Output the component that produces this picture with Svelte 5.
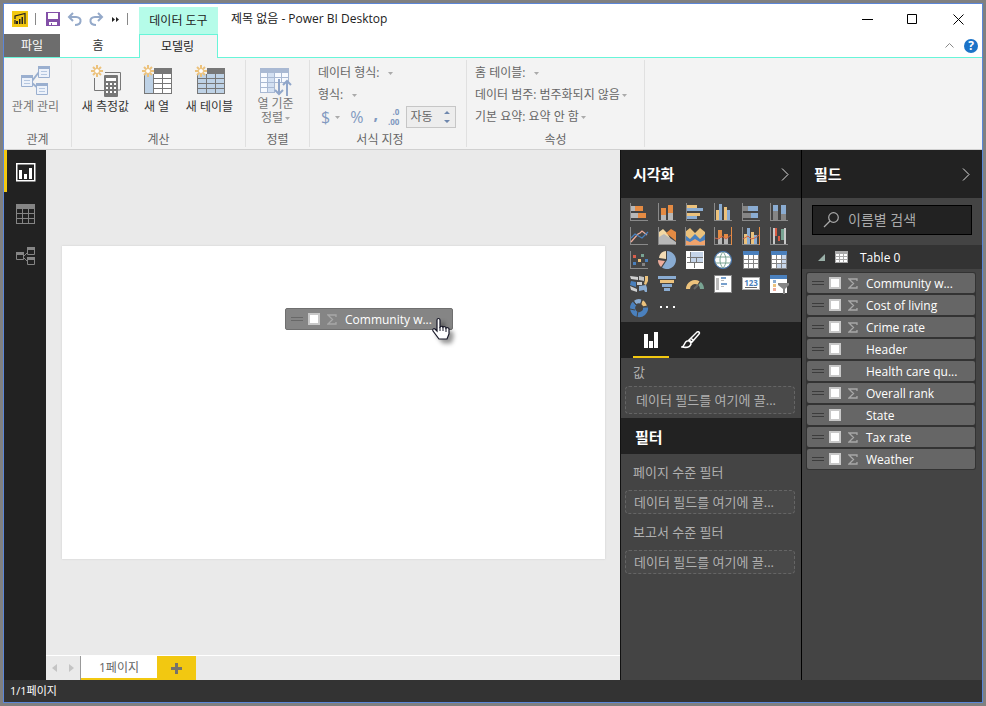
<script>
  const r = (x, y, w, h) => `M${x} ${y}h${w}v${h}h${-w}z`;
  const fill = (f, ...d) => ({ f, d: d.join('') });
  const line = (s, d, w = 1) => ({ s, d, w });
  const axis = fill('#8a8a8a', r(0, 0, 1, 18), r(0, 17, 18, 1));
  const OR = '#e58b43', BL = '#8aacd2', YE = '#ecc27c', GR = '#b8b8b8', DG = '#858585', NB = '#4a80bd', PK = '#eeac9b', GN = '#79a493';

  const visuals = [
    { name: 'Stacked bar chart', parts: [axis, fill(GR, r(1, 3, 4, 5), r(1, 10, 7, 5)), fill(OR, r(5, 3, 8, 5), r(8, 10, 8, 5))] },
    { name: 'Stacked column chart', parts: [axis, fill(GR, r(3, 12, 5, 5), r(10, 10, 5, 7)), fill(OR, r(3, 5, 5, 7), r(10, 2, 5, 8))] },
    { name: 'Clustered bar chart', parts: [axis, fill(YE, r(1, 2, 10, 3), r(1, 10, 13, 3)), fill(BL, r(1, 5, 16, 3), r(1, 13, 10, 3))] },
    { name: 'Clustered column chart', parts: [axis, fill(YE, r(2, 7, 3, 10), r(10, 4, 3, 13)), fill(BL, r(5, 1, 3, 16), r(13, 7, 3, 10))] },
    { name: '100% stacked bar chart', parts: [axis, fill(DG, r(1, 3, 5, 5), r(1, 10, 8, 5)), fill(BL, r(6, 3, 10, 5), r(9, 10, 7, 5))] },
    { name: '100% stacked column chart', parts: [axis, fill(DG, r(3, 8, 5, 9), r(11, 11, 5, 6)), fill(BL, r(3, 2, 5, 6), r(11, 2, 5, 9))] },
    { name: 'Line chart', parts: [axis, line(PK, 'M1 15L8 7l2-1 2-2 5 4', 1.3), line(NB, 'M1 11l4-4 7 4 6-6', 1.3)] },
    { name: 'Area chart', parts: [axis, fill('#f2d8a4', 'M1 5l4-3 4 4 3 5-11 2z'), fill(OR, 'M8 6l5-4 5 3v9z'), fill(GR, 'M1 10l5-3 12 8v2H1z')] },
    { name: 'Stacked area chart', parts: [fill(YE, 'M-1 5l5-4 5 5 5-5 5 4v8H-1z'), fill(NB, 'M-1 8l5 4 5-5 5 5 5-5v9H-1z'), fill('#f0a36c', 'M-1 18v-5l5 2 5-3 5 3 5-2v5z'), fill(DG, r(-1, 0, 1, 18), r(-1, 18, 20, 1))] },
    { name: 'Line and stacked column chart', parts: [axis, fill(OR, r(17, 0, 1, 18), r(4, 3, 4, 8), r(10, 7, 4, 4)), fill(GR, r(4, 11, 4, 6), r(10, 11, 4, 6)), line('#cf6449', 'M1 11l4 1 3-3 4 3 5-4', 1)] },
    { name: 'Line and clustered column chart', parts: [axis, fill(OR, r(17, 0, 1, 18)), fill(YE, r(2, 7, 3, 10), r(9, 5, 3, 12)), fill(BL, r(5, 1, 3, 16), r(12, 8, 3, 9)), line('#cf6449', 'M1 12l5-3 3 3 4-1 4-3', 1)] },
    { name: 'Waterfall chart', parts: [axis, fill('#c9c9c9', r(3, 1, 2, 16), r(14, 1, 2, 16)), fill('#d85b43', r(5, 1, 2, 8), r(8, 9, 2, 5)), fill(GN, r(11, 2, 3, 11))] },
    { name: 'Scatter chart', parts: [axis, fill('#d95f4c', r(3, 4, 3, 3)), fill(GN, r(11, 3, 3, 3)), fill(YE, r(8, 8, 3, 3)), fill(NB, r(3, 11, 3, 3), r(15, 8, 3, 3)), fill(DG, r(12, 12, 3, 3))] },
    { name: 'Pie chart', parts: [fill(BL, 'M9 9V0a9 9 0 1 1-5 16.5z'), fill(PK, 'M7 10l-4 6A9 9 0 0 1 0 9z'), fill('#f3dcb5', 'M8 8V0A8 8 0 0 0 1 7z')] },
    { name: 'Treemap', parts: [fill('#fff', r(0, 0, 18, 18)), fill('#777', r(1, 1, 16, 16)), fill('#fff', r(1, 1, 3, 5), r(1, 7, 3, 4), r(1, 12, 7, 5), r(9, 12, 8, 5)), fill('#c5d4e8', r(5, 1, 12, 5), r(5, 7, 5, 4), r(11, 7, 6, 4))] },
    { name: 'Map', parts: [fill('#fff', 'M9 1a8 8 0 1 0 0 16A8 8 0 1 0 9 1z'), line(NB, 'M9 .5a8.5 8.5 0 1 0 0 17a8.5 8.5 0 1 0 0-17z'), line(GN, 'M2 6h14M2 12h14M9 1C5 5 5 13 9 17M9 1c4 4 4 12 0 16')] },
    { name: 'Table', parts: [fill(DG, r(1, 0, 16, 18)), fill(NB, r(1, 0, 16, 4)), fill('#fff', r(2, 4, 4, 4), r(7, 4, 4, 4), r(12, 4, 4, 4), r(2, 9, 4, 3), r(7, 9, 4, 3), r(12, 9, 4, 3), r(2, 13, 4, 4), r(7, 13, 4, 4), r(12, 13, 4, 4))] },
    { name: 'Matrix', parts: [fill(DG, r(1, 0, 16, 18)), fill(NB, r(1, 0, 16, 4)), fill('#fff', r(2, 4, 4, 4), r(7, 4, 4, 4), r(2, 9, 4, 3), r(7, 9, 4, 3), r(2, 13, 4, 4)), fill('#c8d7eb', r(12, 4, 4, 4), r(12, 9, 4, 3), r(7, 13, 4, 4), r(12, 13, 4, 4))] },
    { name: 'Filled map', parts: [fill('#d0d0d0', 'M0 1l8 1v3l-7-1zM7 7h5v3H7zM0 11l7 3v3l-6-2z'), fill(NB, 'M1 6l5 1v5l-6-2z'), fill('#c5c5c5', 'M9 1l5 1v4l-5-1z'), fill(YE, 'M15 1h3v5l-2 4-2-1 1-4z'), fill(BL, 'M9 11l7-1 1 3v4h-2l-1-2-5 1z')] },
    { name: 'Funnel', parts: [fill(BL, r(0, 1, 18, 3), r(4, 9, 10, 3), r(6, 13, 6, 3)), fill(YE, r(2, 5, 14, 3))] },
    { name: 'Gauge', parts: [line(YE, 'M2 14a7 7 0 0 1 10.5-6', 4), line(GN, 'M13.500 8.500A7 7 0 0 1 16 14', 4), line('#666', 'M8 14l4-4', 2)] },
    { name: 'Multi-row card', parts: [fill('#888', r(0, 0, 18, 18)), fill('#fff', r(1, 1, 16, 16)), fill('#bbb', r(2, 3, 3, 12)), fill('#77a0cd', r(7, 2, 5, 2), r(7, 8, 6, 2)), fill('#bbb', r(7, 5, 3, 1), r(7, 11, 3, 1))] },
    { name: 'Card', text: '123', parts: [fill('#aaa', r(0, 2, 18, 13)), fill('#fff', r(1, 3, 16, 11)), fill('#666', r(3, 12, 12, 1))] },
    { name: 'Slicer', parts: [fill('#fff', r(0, 0, 17, 18)), fill(NB, r(0, 0, 17, 4)), fill(BL, r(3, 5, 3, 3)), fill(YE, r(3, 9, 3, 3)), fill(PK, r(3, 13, 3, 3)), fill('#858585', 'M8 8h11v2l-4 4v5h-2v-5l-5-4z')] },
    { name: 'Donut chart', parts: [line(NB, 'M15.500 8A6.500 6.500 0 1 1 4.500 4.500', 5), line(BL, 'M5 3.500A6.500 6.500 0 0 1 11 2.500', 4), line(YE, 'M12 3a7 7 0 0 1 3 4', 4), line('#444', 'M3 1l3 5M12 0l-1 5M18 8h-5M0 10l5 1M8 12l-1 6')] },
    { name: 'More visuals', parts: [fill('#fff', r(2, 7, 2, 2), r(8, 7, 2, 2), r(15, 7, 2, 2))] }
  ];

  const fields = [
    ['Community w...', true], ['Cost of living', true], ['Crime rate', true],
    ['Header', false], ['Health care qu...', false], ['Overall rank', true],
    ['State', false], ['Tax rate', true], ['Weather', true]
  ];
</script>

{#snippet sigma()}
  <svg class="sigma" width="10" height="11" viewBox="0 0 10 11" fill="none" stroke="#a8a8a8" stroke-width="1.3"><path d="M9 3V1H1l4.500 4.500L1 10h8V8" /></svg>
{/snippet}

{#snippet grip(color)}
  <svg class="grip" width="12" height="5" viewBox="0 0 12 5"><path d="M0 0h12v1H0zM0 3h12v1H0z" fill={color} /></svg>
{/snippet}

{#snippet star()}
  <g stroke="#ecc27c" stroke-width="2" fill="none"><path d="M6 0v12M0 6h12M2 2l8 8M10 2l-8 8" /></g>
  <circle cx="6" cy="6" r="2.5" fill="#fff" stroke="#ecc27c" />
{/snippet}

{#snippet caret()}
  <svg class="caret" width="5" height="3" viewBox="0 0 5 3"><path d="M0 0h5L2.500 3z" fill="#aaa" /></svg>
{/snippet}

{#snippet pick(id, label, value)}
  <div class="pick">
    <label for={id}>{label}</label>
    <select {id}><option>{value}</option></select>
    {@render caret()}
  </div>
{/snippet}

<div class="desktop">
  <div class="window">
    <header class="title">
      <div class="quick">
        <svg class="logo" width="16" height="16" viewBox="0 0 16 16"><path d="M0 0h16v16H0z" fill="#f2c811" /><g fill="none" stroke="#222" stroke-width="1.2"><path d="M3 8V5l10-2.500V13M3 9v4" /></g><path d="M4 10h2v3H4zM7 8h1.500v5H7zM9.500 6H11v7H9.500z" fill="#222" /></svg>
        <i class="bar"></i>
        <button aria-label="저장"><svg width="14" height="14" viewBox="0 0 14 14"><path d="M0 0h14v14H0z" fill="#8350a8" /><path d="M2 1h10v6H2zM3 10h8v3H6v-2H5v2H3z" fill="#fff" /></svg></button>
        <button aria-label="실행 취소"><svg width="15" height="14" viewBox="0 0 15 14" fill="none" stroke="#94a9c9" stroke-width="2"><path d="M6 1L2 5l4 4M2 5h7c3 0 5 2 4.500 4.500C13 12 11 13 8 13" /></svg></button>
        <button aria-label="다시 실행"><svg width="15" height="14" viewBox="0 0 15 14" fill="none" stroke="#94a9c9" stroke-width="2"><path d="M9 1l4 4-4 4M13 5H6C3 5 1 7 1.500 9.500 2 12 4 13 7 13" /></svg></button>
        <button class="more" aria-label="사용자 지정"><svg width="9" height="5" viewBox="0 0 9 5"><path d="M1 0l3 2.500L1 5zM5 0l3 2.500L5 5z" fill="#222" /></svg></button>
        <i class="bar"></i>
      </div>
      <div class="context">데이터 도구</div>
      <h1>제목 없음 - Power BI Desktop</h1>
      <div class="controls">
        <button aria-label="최소화"><svg width="11" height="10" viewBox="0 0 11 10"><path d="M0 5h11v1H0z" /></svg></button>
        <button aria-label="최대화"><svg width="11" height="10" viewBox="0 0 11 10" fill="none" stroke="#000"><path d="M.5.5h9v9h-9z" /></svg></button>
        <button aria-label="닫기"><svg width="11" height="11" viewBox="0 0 11 11" fill="none" stroke="#000"><path d="M.5.5l10 10M10.500.5l-10 10" /></svg></button>
      </div>
    </header>

    <nav class="tabs">
      <button class="file">파일</button>
      <button class="home">홈</button>
      <button class="model">모델링</button>
      <div class="help">
        <svg width="9" height="5" viewBox="0 0 9 5" fill="none" stroke="#888"><path d="M.5 4.500l4-4 4 4" /></svg>
        <button aria-label="도움말">?</button>
      </div>
    </nav>

    <section class="ribbon">
      <div class="group g1">
        <div class="tools">
          <button class="tool dim">
            <svg width="30" height="32" viewBox="0 0 30 32"><path d="M11 16l7-9M11 18l7 6" stroke="#9aafcf" stroke-width="2" fill="none" /><g fill="#edf2fa" stroke="#9aafcf"><path d="M.5 10.500h11v11H.5zM17.500 1.500h11v11h-11zM15.500 18.500h11v11h-11z" /></g><path d="M0 10h12v3H0zM17 1h12v3H17zM15 18h12v3H15z" fill="#9aafcf" /><path d="M3 15.500h6M3 18.500h6M20 6.500h6M20 9.500h6M18 23.500h6M18 26.500h6" stroke="#b5c7e0" /></svg>
            <span>관계 관리</span>
          </button>
        </div>
        <h2>관계</h2>
      </div>
      <div class="group g2">
        <div class="tools">
          <button class="tool t1">
            <svg width="30" height="32" viewBox="0 0 30 32"><path d="M3.500 13v12.500H13M14 7.500h15.500V25H27" fill="none" stroke="#777" />{@render star()}<rect x="13" y="10" width="14" height="22" rx="1" fill="#777" /><path d="M15 13h10v3H15zM15 18h2v2h-2zM19 18h2v2h-2zM23 18h2v2h-2zM15 22h2v2h-2zM19 22h2v2h-2zM23 22h2v2h-2zM15 26h2v2h-2zM19 26h2v2h-2zM23 26h2v2h-2z" fill="#fff" /></svg>
            <span>새 측정값</span>
          </button>
          <button class="tool t2">
            <svg width="30" height="32" viewBox="0 0 30 32"><path d="M2 3h28v26H2z" fill="#777" /><path d="M3 9h8v19H3z" fill="#bed2e6" /><path d="M12 9h8v4h-8zM21 9h8v4h-8zM12 14h8v4h-8zM21 14h8v4h-8zM12 19h8v4h-8zM21 19h8v4h-8zM12 24h8v4h-8zM21 24h8v4h-8z" fill="#fff" /><path d="M0 0h12v9H0z" fill="#f3f3f3" />{@render star()}</svg>
            <span>새 열</span>
          </button>
          <button class="tool t3">
            <svg width="30" height="32" viewBox="0 0 30 32"><path d="M2 3h28v26H2z" fill="#777" /><path d="M3 9h8v4H3zM3 14h8v4H3zM3 19h8v4H3zM3 24h8v4H3zM12 9h8v4h-8zM21 9h8v4h-8zM12 14h8v4h-8zM21 14h8v4h-8zM12 19h8v4h-8zM21 19h8v4h-8zM12 24h8v4h-8zM21 24h8v4h-8z" fill="#bed2e6" /><path d="M0 0h12v9H0z" fill="#f3f3f3" />{@render star()}</svg>
            <span>새 테이블</span>
          </button>
        </div>
        <h2>계산</h2>
      </div>
      <div class="group g3">
        <div class="tools">
          <button class="tool dim sort">
            <svg width="32" height="32" viewBox="0 0 32 32"><path d="M0 3h29v25H0z" fill="#a9b9d3" /><path d="M1 8h6v4H1zM15 8h6v4h-6zM22 8h6v4h-6zM1 13h6v4H1zM15 13h6v4h-6zM22 13h6v4h-6zM1 18h6v4H1zM1 23h6v4H1z" fill="#f7faff" /><path d="M8 8h6v4H8zM8 13h6v4H8zM8 18h6v4H8zM8 23h6v4H8z" fill="#d3e0f2" /><path d="M15 18h14v10H15z" fill="#f3f3f3" /><path d="M19 14v15M15 25l4 4 4-4M27 31V16M23 20l4-4 4 4" fill="none" stroke="#90a6ca" stroke-width="2" /></svg>
            <span>열 기준</span>
            <span>정렬{@render caret()}</span>
          </button>
        </div>
        <h2>정렬</h2>
      </div>
      <div class="group g4">
        <div class="form">
          {@render pick('type', '데이터 형식:', '')}
          {@render pick('format', '형식:', '')}
          <div class="formats">
            <button aria-label="통화">$ {@render caret()}</button>
            <button>%</button>
            <button class="comma">,</button>
            <button class="decimals" aria-label="소수 자릿수"><span>.0</span><span>.00</span></button>
            <div class="spin">
              <input aria-label="소수 자릿수 값" value="자동" />
              <svg width="6" height="14" viewBox="0 0 6 14"><path d="M0 4l3-3 3 3zM0 10h6l-3 3z" fill="#6e87ad" /></svg>
            </div>
          </div>
        </div>
        <h2>서식 지정</h2>
      </div>
      <div class="group g5">
        <div class="form">
          {@render pick('home', '홈 테이블:', '')}
          {@render pick('category', '데이터 범주:', '범주화되지 않음')}
          {@render pick('summary', '기본 요약:', '요약 안 함')}
        </div>
        <h2>속성</h2>
      </div>
    </section>

    <main>
      <nav class="rail">
        <button class="on" aria-label="보고서"><svg width="20" height="19" viewBox="0 0 20 19"><path d="M.75.75h18v17h-18z" fill="none" stroke="#fff" stroke-width="1.5" /><path d="M3 7h3v9H3zM8 11h3v5H8zM13 5h3v11h-3z" fill="#fff" /></svg></button>
        <button aria-label="데이터"><svg width="20" height="20" viewBox="0 0 20 20"><path d="M0 0h19v20H0z" fill="#858585" /><path d="M1 5h5v4H1zM7 5h5v4H7zM13 5h5v4h-5zM1 10h5v4H1zM7 10h5v4H7zM13 10h5v4h-5zM1 15h5v4H1zM7 15h5v4H7zM13 15h5v4h-5z" fill="#222" /></svg></button>
        <button aria-label="관계"><svg width="20" height="19" viewBox="0 0 20 19"><g fill="none" stroke="#858585"><path d="M.5 5.500h7v7h-7zM11.500.5h7v7h-7zM11.500 10.500h7v7h-7zM8 9l3-3M8 11l3 3" /></g><path d="M0 5h8v3H0zM11 0h8v3h-8zM11 10h8v3h-8z" fill="#858585" /></svg></button>
      </nav>

      <div class="work">
        <div class="canvas">
          <div class="sheet">
            <div class="drag">
              {@render grip('#686868')}
              <input type="checkbox" aria-label="Community w..." />
              <span class="sig">{@render sigma()}</span>
              <span>Community w...</span>
              <svg class="hand" width="28" height="32" viewBox="0 0 28 32"><path d="M7 3c0-2 3-2 3 0v7c1-1 3-1 3 0 1-1 3 0 3 1 1-1 3 0 3 1v5l-2 5H9l-6-8c-1-2 1-3 2-2l2 2z" fill="#fff" stroke="#151525" stroke-width="1.2" /><path d="M10 10v4M13 10v4M16 11v4" stroke="#151525" /></svg>
            </div>
          </div>
        </div>
        <div class="pages">
          <button class="arrow" aria-label="이전"><svg width="5" height="8" viewBox="0 0 5 8"><path d="M5 0v8L0 4z" fill="#c4c4c4" /></svg></button>
          <button class="arrow" aria-label="다음"><svg width="5" height="8" viewBox="0 0 5 8"><path d="M0 0v8l5-4z" fill="#c4c4c4" /></svg></button>
          <button class="page">1페이지</button>
          <button class="add" aria-label="새 페이지"><svg width="11" height="11" viewBox="0 0 11 11"><path d="M4 0h3v4h4v3H7v4H4V7H0V4h4z" fill="#77726a" /></svg></button>
        </div>
      </div>

      <aside class="viz">
        <div class="head"><h3>시각화</h3><svg width="8" height="13" viewBox="0 0 8 13" fill="none" stroke="#ddd"><path d="M1 .5l6 6-6 6" /></svg></div>
        <div class="grid">
          {#each visuals as v}
            <button aria-label={v.name}>
              <svg width="18" height="18" viewBox="0 0 18 18">
                {#each v.parts as p}
                  <path d={p.d} fill={p.f ?? 'none'} stroke={p.s ?? 'none'} stroke-width={p.w ?? 0} />
                {/each}
                {#if v.text}<text x="9" y="11" text-anchor="middle" font-size="8" font-weight="700" fill="#4a80bd">{v.text}</text>{/if}
              </svg>
            </button>
          {/each}
        </div>
        <div class="modes">
          <button class="on" aria-label="필드"><svg width="16" height="16" viewBox="0 0 16 16"><path d="M1 2h4v14H1zM6 9h4v7H6zM11 0h4v16h-4z" fill="#fff" /></svg></button>
          <button aria-label="서식"><svg width="20" height="18" viewBox="0 0 20 18" fill="none" stroke="#fff" stroke-width="1.5"><path d="M8 9l8-8c2-1 3 1 2 2l-7 8zM10 7l3 3M6 10c2-1 4 1 4 3-1 3-4 4-9 3 3-1 2-5 5-6z" /></svg></button>
        </div>
        <div class="well">
          <p class="value">값</p>
          <div class="drop tall">데이터 필드를 여기에 끌...</div>
        </div>
        <h3 class="filter">필터</h3>
        <div class="filters">
          <p>페이지 수준 필터</p>
          <div class="drop">데이터 필드를 여기에 끌...</div>
          <p>보고서 수준 필터</p>
          <div class="drop">데이터 필드를 여기에 끌...</div>
        </div>
      </aside>

      <aside class="fields">
        <div class="head"><h3>필드</h3><svg width="8" height="13" viewBox="0 0 8 13" fill="none" stroke="#ddd"><path d="M1 .5l6 6-6 6" /></svg></div>
        <label class="search">
          <svg width="17" height="16" viewBox="0 0 17 16" fill="none" stroke="#aaa" stroke-width="1.2"><circle cx="10.5" cy="5.5" r="4.8" /><path d="M7 9l-6 6" /></svg>
          <input aria-label="이름별 검색" placeholder="이름별 검색" />
        </label>
        <div class="table">
          <svg width="7" height="7" viewBox="0 0 7 7"><path d="M7 0v7H0z" fill="#9ab0a8" /></svg>
          <svg width="13" height="12" viewBox="0 0 13 12"><path d="M0 0h13v12H0z" fill="#aaa" /><path d="M1 3h3v2H1zM5 3h3v2H5zM9 3h3v2H9zM1 6h3v2H1zM5 6h3v2H5zM9 6h3v2H9zM1 9h3v2H1zM5 9h3v2H5zM9 9h3v2H9z" fill="#fff" /></svg>
          <span class="name">Table 0</span>
        </div>
        <ul>
          {#each fields as [name, numeric]}
            <li>
              <label>
                {@render grip('#3c3c3c')}
                <input type="checkbox" />
                <span class="sig">{#if numeric}{@render sigma()}{/if}</span>
                <span class="name">{name}</span>
              </label>
            </li>
          {/each}
        </ul>
      </aside>
    </main>

    <footer>1/1페이지</footer>
  </div>
</div>

<style>
  :global(body) { margin: 0; }
  .desktop, .desktop :global(*) { box-sizing: border-box; }
  .desktop {
    min-height: 100vh; padding: 3px; background: #808080; display: flex;
    font: 12px/16px "Open Sans", "Noto Sans CJK KR", sans-serif; color: #333;
  }
  button, input, select { font: inherit; color: inherit; background: none; border: 0; padding: 0; margin: 0; border-radius: 0; }
  button { display: flex; align-items: center; justify-content: center; }
  h1, h2, h3, p, ul { margin: 0; padding: 0; font-weight: 400; font-size: inherit; list-style: none; }
  svg { flex: none; display: block; }
  .window { flex: 1; min-width: 0; display: flex; flex-direction: column; border: 1px solid #5b86d8; background: #fff; }

  .title { display: flex; height: 30px; }
  .quick { width: 135px; display: flex; align-items: center; padding-left: 8px; gap: 7px; }
  .bar { width: 1px; height: 12px; background: #888; margin-right: 3px; }
  .bar:last-child { margin: 0; }
  .context { width: 79px; margin-top: 3px; background: #b5fce9; display: flex; align-items: center; justify-content: center; color: #222; }
  h1 { flex: 1; padding-left: 13px; line-height: 30px; color: #222; white-space: nowrap; }
  .controls { display: flex; }
  .controls button { width: 45px; }
  .controls button:last-child { width: 47px; }

  .tabs { display: flex; height: 24px; border-bottom: 1px solid #68f5d9; }
  .file { width: 56px; background: #6d6d6d; color: #fff; }
  .home { width: 79px; padding-right: 3px; }
  .model { width: 79px; height: 24px; padding-right: 2px; background: #f3f3f3; border: 1px solid #68f5d9; border-bottom: 0; color: #222; }
  .help { flex: 1; display: flex; align-items: center; justify-content: flex-end; gap: 10px; padding-right: 4px; }
  .help button { width: 14px; height: 14px; border-radius: 50%; background: #1b73c8; color: #fff; font-weight: 700; }

  .ribbon { display: flex; height: 92px; padding: 2px 0; background: #f3f3f3; border-bottom: 1px solid #d0d0d0; }
  .group { display: flex; flex-direction: column; justify-content: space-between; border-right: 1px solid #e0e0e0; }
  h2 { text-align: center; color: #666; line-height: 14px; }
  .g1 { width: 68px; } .g2 { width: 174px; } .g3 { width: 64px; } .g4 { width: 157px; } .g5 { width: 178px; }
  .g4 h2 { padding-right: 16px; }
  .tools { display: flex; justify-content: center; padding-top: 5px; }
  .g1 .tools, .g3 .tools { padding-right: 4px; }
  .tool { flex-direction: column; justify-content: flex-start; gap: 3px; line-height: 14px; white-space: nowrap; }
  .t1 { width: 54px; } .t2 { width: 48px; } .t3 { width: 58px; }
  .sort { gap: 0; }
  .dim { color: #777; }
  .tool .caret { display: inline-block; vertical-align: middle; margin-left: 2px; }
  .form { display: flex; flex-direction: column; padding: 2px 0 0 8px; color: #666; }
  .pick { display: flex; align-items: center; height: 22px; white-space: nowrap; }
  .pick select { appearance: none; margin-left: 3px; min-width: 4px; }
  .pick .caret { margin-left: 2px; }
  .formats { display: flex; align-items: center; height: 22px; gap: 10px; color: #8199c0; font-size: 16px; padding-left: 3px; }
  .formats button { gap: 5px; }
  .formats .comma { align-self: flex-start; font-weight: 700; }
  .formats .decimals { flex-direction: column; align-items: flex-end; gap: 0; font-size: 8px; line-height: 10px; font-weight: 700; }
  .spin { display: flex; align-items: center; width: 50px; height: 22px; margin-left: -3px; border: 1px solid #c6c6c6; background: #ededed; padding: 0 5px 0 3px; }
  .spin input { flex: 1; width: 0; font-size: 12px; color: #666; }

  main { flex: 1; display: flex; min-height: 0; }
  .rail { width: 42px; background: #222; }
  .rail button { width: 42px; height: 42px; border-left: 3px solid transparent; padding: 2px 1px 0 0; }
  .rail .on { border-color: #f2c811; }
  .work { flex: 1; min-width: 0; display: flex; flex-direction: column; background: #eaeaea; }
  .canvas { flex: 1; display: flex; align-items: center; padding: 0 15px 0 16px; }
  .sheet { position: relative; flex: 1; aspect-ratio: 543 / 313; background: #fff; box-shadow: 0 0 2px #ccc; }
  .drag {
    position: absolute; left: 223px; top: 62px; width: 168px; height: 22px; padding-left: 5px; display: flex; align-items: center;
    background: #858585; border: 1px solid #6f6f6f; border-radius: 2px; color: #fff;
  }
  .hand { position: absolute; left: 144px; top: 8px; filter: drop-shadow(4px 4px 2px rgb(0 0 0 / 40%)); }
  .pages { display: flex; height: 25px; border-top: 1px solid #fff; }
  .arrow { width: 17px; }
  .page { width: 77px; border-left: 1px solid #999; background: #fff; box-shadow: inset 0 -2px #f2c811; color: #666; }
  .add { width: 39px; background: #f2c811; }

  aside { background: #444; color: #fff; }
  h3 { font-size: 15px; line-height: 24px; font-weight: 700; }
  .head { height: 48px; padding: 0 12px; background: #222; display: flex; align-items: center; justify-content: space-between; }
  .viz { width: 182px; border-left: 1px solid #111; border-right: 1px solid #000; }
  .grid { display: grid; grid-template-columns: repeat(6, 28px); grid-auto-rows: 24px; padding: 2px 4px; }
  .grid svg { overflow: visible; }
  .modes { display: flex; height: 36px; padding-left: 12px; gap: 4px; background: #222; }
  .modes button { width: 36px; padding-top: 2px; border-bottom: 2px solid transparent; }
  .modes .on { border-color: #f2c811; }
  .well, .filters { padding: 0 6px 4px 4px; font-size: 13px; color: #b0b0b0; }
  .value { height: 28px; line-height: 28px; padding-left: 8px; }
  .drop { height: 24px; line-height: 22px; padding-left: 8px; border: 1px dashed #656565; border-radius: 4px; background: #494949; white-space: nowrap; }
  .tall { height: 28px; line-height: 26px; padding-left: 10px; }
  .filter { height: 36px; line-height: 38px; padding-left: 14px; background: #222; }
  .filters p { height: 36px; line-height: 36px; padding-left: 8px; }

  .fields { width: 180px; }
  .search { display: flex; align-items: center; gap: 8px; height: 30px; margin: 7px 10px 10px; padding: 0 10px; background: #222; border: 1px solid #000; }
  .search input { flex: 1; width: 0; font-size: 14px; color: #fff; outline: 0; }
  .search input::placeholder { color: #aaa; opacity: 1; }
  .table { display: flex; align-items: center; height: 24px; padding-left: 16px; background: #333; }
  .table svg + svg { margin: 0 12px 0 10px; }
  .name, .drag span { padding-top: 2px; }
  ul { display: flex; flex-direction: column; gap: 2px; margin: 3px 6px 0 4px; padding: 1px; background: #333; border-radius: 3px; }
  li label { display: flex; align-items: center; height: 20px; padding-left: 5px; background: #666; border-radius: 2px; }
  input[type='checkbox'] { appearance: none; width: 12px; height: 12px; margin-left: 5px; background: #fff; border: 2px solid #c8c8c8; }
  .sig, .drag .sig { width: 18px; margin-left: 7px; padding: 0; }

  footer { height: 22px; padding-left: 6px; line-height: 21px; background: #333; color: #fff; font-size: 11px; }
</style>
